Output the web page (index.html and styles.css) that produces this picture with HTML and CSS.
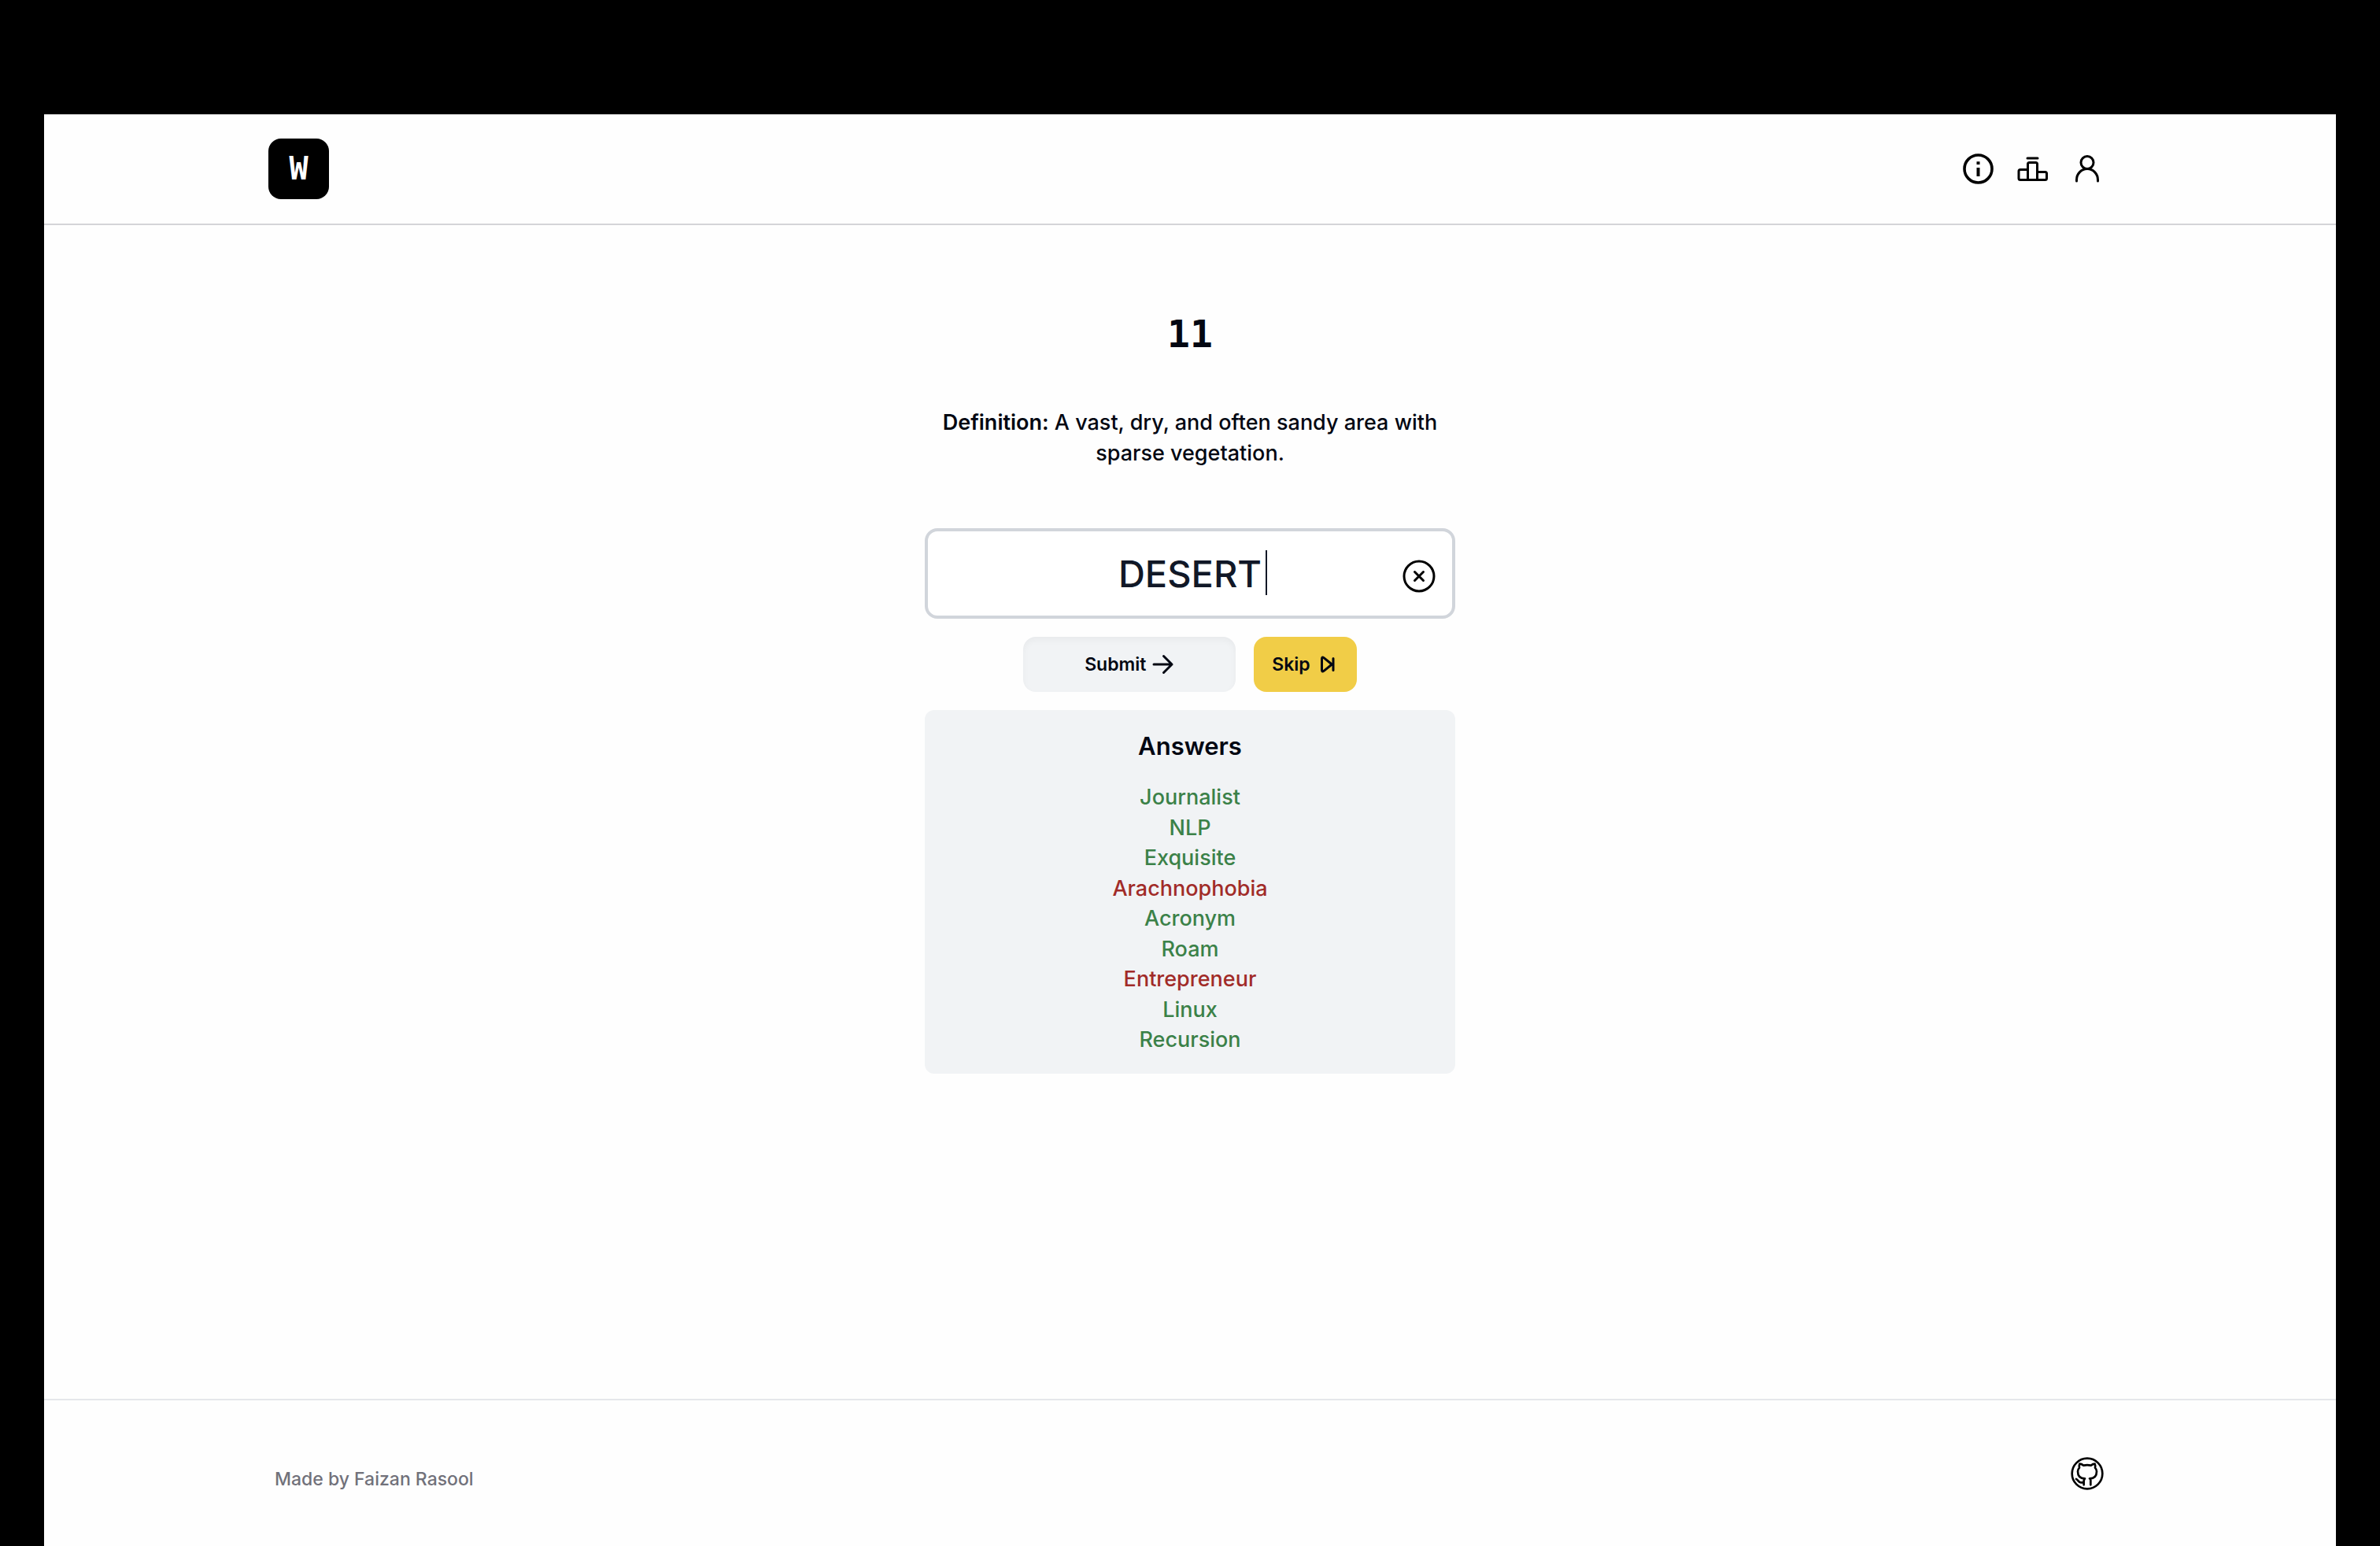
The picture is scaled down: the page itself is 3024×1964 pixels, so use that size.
FILE: index.html
```html
<!DOCTYPE html>
<html lang="en">
<head>
    <meta charset="utf-8">
    <title>Word Game</title>
    <link rel="stylesheet" href="styles.css">
</head>

<body>
    <div class="page">
        <header class="header">
            <div class="container">
                <a class="logo" href="#">W</a>
                <nav class="nav">
                    <button class="icon-btn" type="button" aria-label="How to play">
                        <svg viewBox="0 0 46 46"><circle cx="22.5" cy="22.5" r="17.5" stroke-width="3.6" /><path d="M22.500 21v11M22.500 13.300v3.600" stroke-width="4" stroke-linecap="butt" /></svg>
                    </button>
                    <button class="icon-btn" type="button" aria-label="Leaderboard">
                        <svg viewBox="0 0 46 46"><path d="M16 9h13M16.500 36V16.500a2 2 0 0 1 2-2h8a2 2 0 0 1 2 2V36M16.500 23.500H7a2 2 0 0 0-2 2v9a2 2 0 0 0 2 2h31.500a2 2 0 0 0 2-2v-6a2 2 0 0 0-2-2H28.500" stroke-width="3" /></svg>
                    </button>
                    <button class="icon-btn" type="button" aria-label="Account">
                        <svg viewBox="0 0 46 46"><circle cx="23" cy="14.500" r="8" /><path d="M9.500 38V36.500a13.500 14 0 0 1 27 0V38" /></svg>
                    </button>
                </nav>
            </div>
        </header>

        <main class="main">
            <h1 class="timer">11</h1>
            <p class="definition"><b>Definition:</b> A vast, dry, and often sandy area with sparse vegetation.</p>

            <form class="game" onsubmit="event.preventDefault();">
                <div class="field">
                    <input class="guess" type="text" id="guess" value="DESERT" aria-label="Your answer" autocomplete="off">
                    <span class="caret"></span>
                    <button class="icon-btn clear" type="button" aria-label="Clear">
                        <svg viewBox="0 0 46 46"><circle cx="23" cy="23" r="19" /><path d="M17.500 17.500l11 11M28.500 17.500l-11 11" /></svg>
                    </button>
                </div>
                <div class="actions">
                    <button class="btn submit" type="submit">Submit
                        <svg viewBox="0 0 28 28"><path d="M2 14h23M14.500 3.500L25 14 14.500 24.500" /></svg>
                    </button>
                    <button class="btn skip" type="button">Skip
                        <svg viewBox="0 0 28 28"><path d="M6.500 7v14q0 3 2.500 1.300L17.500 15.500q1.800-1.500 0-3L9 5.700Q6.500 4 6.500 7zM21 6.500v15" /></svg>
                    </button>
                </div>
            </form>

            <section class="answers">
                <h2>Answers</h2>
                <ul>
                    <li class="right">Journalist</li>
                    <li class="right">NLP</li>
                    <li class="right">Exquisite</li>
                    <li class="wrong">Arachnophobia</li>
                    <li class="right">Acronym</li>
                    <li class="right">Roam</li>
                    <li class="wrong">Entrepreneur</li>
                    <li class="right">Linux</li>
                    <li class="right">Recursion</li>
                </ul>
            </section>
        </main>

        <footer class="footer">
            <div class="container">
                <p class="credit">Made by Faizan Rasool</p>
                <a class="icon-btn github" href="#" aria-label="GitHub">
                    <svg viewBox="-69 -69 138 138"><circle r="58" /><path d="M13 43V24q0-3-4-5C26 19 36 10 36-8q0-8-6-14 2-8-1-15-8 0-15 6Q0-34-14-31q-7-6-15-6-3 7-1 15-6 6-6 14C-36 10-26 19-9 19q-4 4-4 11v13M-42 21c8 3 8 13 18 13h11" /></svg>
                </a>
            </div>
        </footer>
    </div>
</body>

</html>
```
FILE: styles.css
```css
* {
    box-sizing: border-box;
}

body {
    margin: 0;
    padding: 145px 56px 0;
    background: #000;
    color: #030712;
    font-family: Inter, "Liberation Sans", sans-serif;
    font-size: 27px;
    font-weight: 500;
    font-optical-sizing: none;
    line-height: 39px;
}

h1, h2, p, ul {
    margin: 0;
    padding: 0;
}

.page {
    display: flex;
    flex-direction: column;
    min-height: calc(100vh - 145px);
    background: #fefefe;
    border-top: 1px solid #c8c8c8;
}

.container {
    display: flex;
    align-items: center;
    justify-content: space-between;
    width: 100%;
    max-width: 2342px;
    margin: 0 auto;
}

/* header */
.header {
    padding: 30px 0 31px;
    border-bottom: 2px solid #d4d4d8;
}

.logo {
    display: flex;
    align-items: center;
    justify-content: center;
    width: 77px;
    height: 77px;
    border-radius: 16px;
    background: #000;
    color: #fff;
    font-family: "DejaVu Sans Mono", monospace;
    font-size: 40px;
    font-weight: 700;
    text-decoration: none;
}

.nav {
    display: flex;
    gap: 23px;
    padding-right: 8px;
}

.icon-btn {
    display: block;
    width: 46px;
    height: 46px;
    padding: 0;
    border: 0;
    background: none;
    color: #000;
    cursor: pointer;
}

svg {
    display: block;
    width: 100%;
    height: 100%;
    fill: none;
    stroke: currentColor;
    stroke-width: 3;
    stroke-linecap: round;
    stroke-linejoin: round;
}

/* game */
.main {
    display: flex;
    flex: 1;
    flex-direction: column;
    align-items: center;
    width: 100%;
    max-width: 674px;
    margin: 0 auto;
    padding-top: 107px;
    text-align: center;
}

.timer {
    font-family: "DejaVu Sans Mono", monospace;
    font-size: 48px;
    line-height: 62px;
}

.definition {
    padding: 62px 16px 76px;
}

.definition b {
    font-weight: 600;
}

.game {
    width: 100%;
}

.field {
    position: relative;
}

.guess {
    display: block;
    width: 100%;
    height: 115px;
    padding: 0 60px;
    border: 4px solid #d1d5db;
    border-radius: 16px;
    outline: none;
    background: #fff;
    color: #111827;
    font: inherit;
    font-size: 47px;
    font-optical-sizing: none;
    text-align: center;
}

.caret {
    position: absolute;
    top: 28px;
    left: calc(50% + 96px);
    width: 2px;
    height: 57px;
    background: #111827;
}

.clear {
    position: absolute;
    top: 38px;
    right: 23px;
}

.actions {
    display: flex;
    justify-content: center;
    gap: 23px;
    padding: 23px 0;
}

.btn {
    display: flex;
    align-items: center;
    justify-content: center;
    gap: 8px;
    height: 70px;
    padding: 0 23px;
    border: 0;
    border-radius: 16px;
    color: #030712;
    font: inherit;
    font-size: 23px;
    font-weight: 600;
    cursor: pointer;
}

.btn svg {
    width: 28px;
    height: 28px;
}

.submit {
    width: 270px;
    background: #f1f3f5;
    box-shadow: inset 0 4px 8px rgba(0, 0, 0, 0.04);
}

.skip {
    background: #f1cd47;
}

.answers {
    display: flex;
    flex-direction: column;
    width: 100%;
    min-height: 462px;
    padding: 23px;
    border-radius: 12px;
    background: #f1f3f5;
}

.answers h2 {
    margin-bottom: 23px;
    font-size: 31px;
    font-weight: 600;
    line-height: 46px;
}

.answers ul {
    display: grid;
    flex: 1;
    line-height: 38px;
    list-style: none;
}

.right {
    color: #3b8148;
}

.wrong {
    color: #a12b28;
}

/* footer */
.footer {
    height: 187px;
    border-top: 2px solid #e5e7eb;
    padding-top: 66px;
}

.footer .container {
    padding: 0 8px;
}

.credit {
    padding-top: 15px;
    color: #71717a;
    font-size: 23px;
}

.github svg {
    stroke-width: 8;
}
```
